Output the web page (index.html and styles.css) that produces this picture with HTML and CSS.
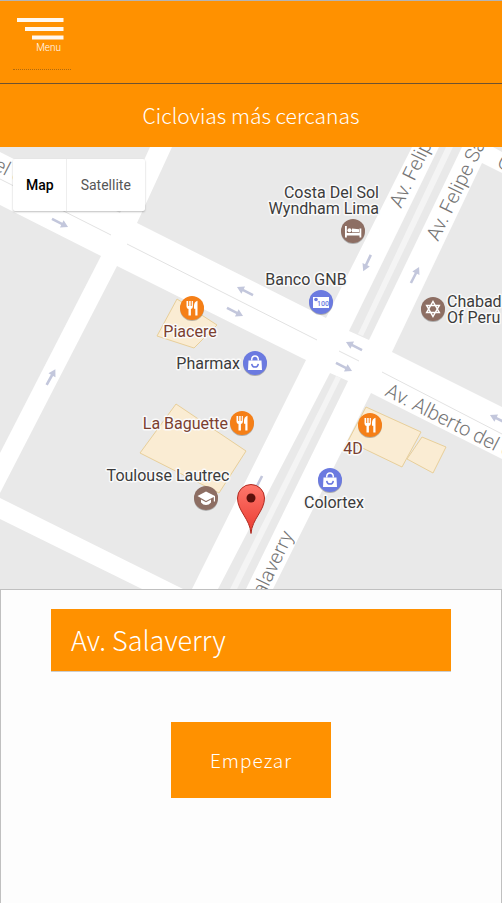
FILE: index.html
```html
<!DOCTYPE html>
<html lang="es">
<head>
<meta charset="utf-8">
<meta name="viewport" content="width=device-width, initial-scale=1">
<title>Ciclovias más cercanas</title>
<link rel="stylesheet" href="styles.css">
</head>
<body>
<header class="topbar">
  <button class="menu" type="button">
    <svg class="menu-icon" viewBox="0 0 48 24" aria-hidden="true">
      <path d="M1 1h46.500v4H1zM9 10h38.500v4H9zM16 18.500h31.500v4H16z"/>
    </svg>
    <span class="menu-label">Menu</span>
  </button>
</header>
<h1 class="title">Ciclovias más cercanas</h1>
<section class="map" aria-label="Mapa">
  <svg class="map-canvas" viewBox="0 147 502 442">
    <defs>
      <linearGradient id="pin-fill" x1="0" y1="0" x2="0" y2="1">
        <stop offset="0" stop-color="#ff776c"/>
        <stop offset="1" stop-color="#ea3a30"/>
      </linearGradient>
      <path id="arrow" d="M-9 -1.300H2V-4L9 0L2 4V1.300H-9z"/>
      <g id="food">
        <path d="M-5.500 -7v5.500q0 2 2 2.500v6.500h2.400v-6.500q2-.5 2-2.500V-7H-.3v5h-1v-5h-1.500v5h-1v-5zM5.500 -7.200q-3.500 1-3.500 5v3h1.300v6.700h2.200z"/>
      </g>
      <g id="shop">
        <path d="M-6.500 -2.500h13l.5 9.500h-14z"/>
        <path class="icon-line" d="M-3.300 -2.500v-1q.3-3.500 3.300-3.500t3.300 3.500v1"/>
        <path class="shop-smile" d="M-3.300 .8q.5 3.300 3.300 3.300t3.300-3.300"/>
      </g>
    </defs>

    <rect class="road" y="147" width="502" height="442"/>
    <g class="block">
      <path d="M0 147H150L120 213L0 152z"/>
      <path d="M172 147H412L326 318L137 223z"/>
      <path d="M439 147H462L369 340L349 331z"/>
      <path d="M482 163L502 173V407L392 352z"/>
      <path d="M493 147H502V152z"/>
      <path d="M0 205L101 256L0 453z"/>
      <path d="M117 266L306 360L192 589H183L0 498V493z"/>
      <path d="M0 519L142 589H0z"/>
      <path d="M330 373L348 381L246 589H218z"/>
      <path d="M371 393L502 459V589H273z"/>
    </g>
    <path class="strip" d="M446 147H453L363 336L358 334zM336 376L341 378L237 589H230z"/>
    <path class="centre" d="M0 179L111 235M127 244L317 340M339 351L359 361M382 372L502 434"/>
    <g class="building">
      <path d="M177 299L217 325L194 348L157 336z"/>
      <path d="M176 404L246 451L219 493L140 453z"/>
      <path d="M366 407L421 432L402 467L348 441z"/>
      <path d="M422 437L446 447L433 473L407 459z"/>
    </g>

    <g class="arrows">
      <use href="#arrow" transform="translate(60 223) rotate(27)"/>
      <use href="#arrow" transform="translate(245 291) rotate(207)"/>
      <use href="#arrow" transform="translate(235 312) rotate(27)"/>
      <use href="#arrow" transform="translate(367 263) rotate(115)"/>
      <use href="#arrow" transform="translate(415 275) rotate(-63)"/>
      <use href="#arrow" transform="translate(51 377) rotate(-61)"/>
      <use href="#arrow" transform="translate(354 346) rotate(207)"/>
      <use href="#arrow" transform="translate(344 367) rotate(27)"/>
      <use href="#arrow" transform="translate(498 419) rotate(207)"/>
      <use href="#arrow" transform="translate(258 484) rotate(117)"/>
    </g>

    <g class="street">
      <text transform="translate(401 209) rotate(-64)">Av. Felipe Salaverry</text>
      <text transform="translate(438 242) rotate(-64)">Av. Felipe Salaverry</text>
      <text transform="translate(384 395) rotate(27)">Av. Alberto del Campo</text>
      <text transform="translate(294 535) rotate(-64)" text-anchor="end">Salaverry</text>
      <text transform="translate(6 176) rotate(27)" text-anchor="end">del</text>
      <text transform="translate(10 179) rotate(27)">Campo</text>
      <text transform="translate(496 166) rotate(27)">Ca</text>
    </g>

    <g class="badge-shadow">
      <circle cx="353" cy="232" r="12"/><circle cx="433" cy="310" r="12"/><circle cx="206" cy="499" r="12"/>
      <circle cx="321" cy="303" r="12"/><circle cx="255" cy="364" r="12"/><circle cx="330" cy="481" r="12"/>
      <circle cx="192" cy="309" r="12"/><circle cx="242" cy="424" r="12"/><circle cx="370" cy="426" r="12"/>
    </g>
    <g class="badge-brown">
      <circle cx="353" cy="231" r="12"/><circle cx="433" cy="309" r="12"/><circle cx="206" cy="498" r="12"/>
    </g>
    <g class="badge-blue">
      <circle cx="321" cy="302" r="12"/><circle cx="255" cy="363" r="12"/><circle cx="330" cy="480" r="12"/>
    </g>
    <g class="badge-orange">
      <circle cx="192" cy="308" r="12"/><circle cx="242" cy="423" r="12"/><circle cx="370" cy="425" r="12"/>
    </g>
    <g class="icon">
      <use href="#food" x="192" y="308"/>
      <use href="#food" x="242" y="423"/>
      <use href="#food" x="370" y="425"/>
      <use href="#shop" x="255" y="363"/>
      <use href="#shop" x="330" y="480"/>
      <path d="M345 226h1.800v7h12.700v-4.500h1.800v9h-1.800v-2h-12.700v2H345z"/>
      <path d="M352 228.500l7 .8v3h-7z"/>
      <circle cx="349.500" cy="230.300" r="2"/>
      <path class="icon-line" d="M433 301.500l6.300 11h-12.600zM433 316.500l6.300-11h-12.600z"/>
      <path d="M206 491.500l9 4.500v5.500h-1.200V497l-7.800 4l-8.500-5z"/>
      <path d="M201 499.500l5 2.700l5-2.700v3q-2 2.500-5 2.500t-5-2.500z"/>
      <rect x="313" y="297" width="16" height="11"/>
    </g>
    <circle class="note-dot" cx="316" cy="299.500" r="1.800"/>
    <text class="note" x="317" y="306">100</text>

    <g class="poi">
      <text x="379" y="198" text-anchor="end">Costa Del Sol</text>
      <text x="379" y="214" text-anchor="end">Wyndham Lima</text>
      <text x="306" y="285" text-anchor="middle">Banco GNB</text>
      <text x="447" y="307">Chabad</text>
      <text x="447" y="323">Of Peru</text>
      <text x="240" y="369" text-anchor="end">Pharmax</text>
      <text x="168" y="481" text-anchor="middle">Toulouse Lautrec</text>
      <text x="334" y="508" text-anchor="middle">Colortex</text>
    </g>
    <g class="poi poi-food">
      <text x="190" y="337" text-anchor="middle">Piacere</text>
      <text x="228" y="429" text-anchor="end">La Baguette</text>
      <text x="353" y="454" text-anchor="middle">4D</text>
    </g>

    <path class="pin" d="M251 533.500C250 519 237.500 511 237.500 498A13.500 13.500 0 0 1 264.500 498C264.500 511 252 519 251 533.500z"/>
    <circle class="pin-dot" cx="251" cy="498" r="4.500"/>
  </svg>
  <div class="map-type">
    <button class="type type-on" type="button">Map</button>
    <button class="type" type="button">Satellite</button>
  </div>
</section>
<main class="panel">
  <h2 class="place">Av. Salaverry</h2>
  <button class="start" type="button">Empezar</button>
</main>
</body>
</html>
```
FILE: styles.css
```css
* { box-sizing: border-box; }

body {
  margin: 0;
  min-height: 100vh;
  display: flex;
  flex-direction: column;
  background: #fdfdfd;
  font-family: "Noto Sans CJK SC", "Open Sans", sans-serif;
  font-weight: 300;
}

button {
  border: 0;
  font: inherit;
  cursor: pointer;
}

.topbar {
  padding: 16px 13px 13px;
  background: #ff9100;
  border-top: 1px solid #b4b4b4;
  border-bottom: 1px solid #6e5230;
}

.menu {
  display: flex;
  flex-direction: column;
  align-items: flex-end;
  width: 58px;
  height: 53px;
  padding: 0 7px 0 0;
  background: none;
  border-bottom: 1px dotted #b06a10;
  color: #fff;
}

.menu-icon {
  width: 48px;
  height: 24px;
  fill: #fff8f0;
}

.menu-label {
  padding-right: 3px;
  font: 300 10px/14px Roboto, sans-serif;
}

.title {
  margin: 0;
  padding: 16px;
  background: #ff9100;
  color: #fff;
  font-size: 21px;
  font-weight: 300;
  line-height: 31px;
  text-align: center;
}

.map { position: relative; }

.map-canvas {
  display: block;
  width: 100%;
  height: auto;
  font-family: Roboto, sans-serif;
}

.road { fill: #fff; }
.block { fill: #e9e9e9; }
.strip { fill: #f4f4f4; }
.centre { fill: none; stroke: #e2e2e2; }
.building { fill: #faecd3; stroke: #e8cf9a; }
.arrows { fill: #c3c7dc; }

.street {
  fill: #757575;
  font-size: 20px;
  font-weight: 300;
}

.badge-shadow { fill: #000; opacity: .25; }
.badge-brown { fill: #8d6e63; }
.badge-blue { fill: #6b7ae0; }
.badge-orange { fill: #f57f17; }
.icon { fill: #fff; }
.icon-line { fill: none; stroke: #fff; stroke-width: 1.500; }
.shop-smile { fill: none; stroke: #6b7ae0; stroke-width: 1.500; }
.note-dot { fill: #6b7ae0; }
.note { fill: #6b7ae0; font-size: 7px; font-weight: 500; }

.poi {
  fill: #3c3c3c;
  font-size: 16px;
  font-weight: 400;
  stroke: #fafafa;
  stroke-width: 3px;
  stroke-linejoin: round;
  paint-order: stroke;
}

.poi-food { fill: #7b3f30; }

.pin { fill: url(#pin-fill); stroke: #b02a20; }
.pin-dot { fill: #5c100c; }

.map-type {
  position: absolute;
  top: 12px;
  left: 13px;
  display: flex;
  border-radius: 2px;
  background: #fff;
  box-shadow: 0 1px 2px rgba(0, 0, 0, .25);
}

.type {
  padding: 0 14px;
  background: none;
  color: #565656;
  font: 400 14px/52px Roboto, sans-serif;
}

.type-on {
  padding: 0 12px 0 13px;
  border-right: 1px solid #eee;
  color: #000;
  font-weight: 500;
}

.panel {
  flex: 1;
  display: flex;
  flex-direction: column;
  align-items: center;
  padding: 19px 0;
  border: 1px solid #c0c0c0;
  border-bottom: 0;
}

.place {
  width: 80%;
  margin: 0 0 50px;
  padding: 10px 20px;
  background: #ff9100;
  border-bottom: 1px solid #ccc;
  color: #fff;
  font-size: 27px;
  font-weight: 300;
  line-height: 42px;
}

.start {
  width: 32%;
  padding: 20px 0;
  background: #ff9100;
  color: #fff;
  font-size: 19px;
  line-height: 36px;
  letter-spacing: 1px;
}
```
